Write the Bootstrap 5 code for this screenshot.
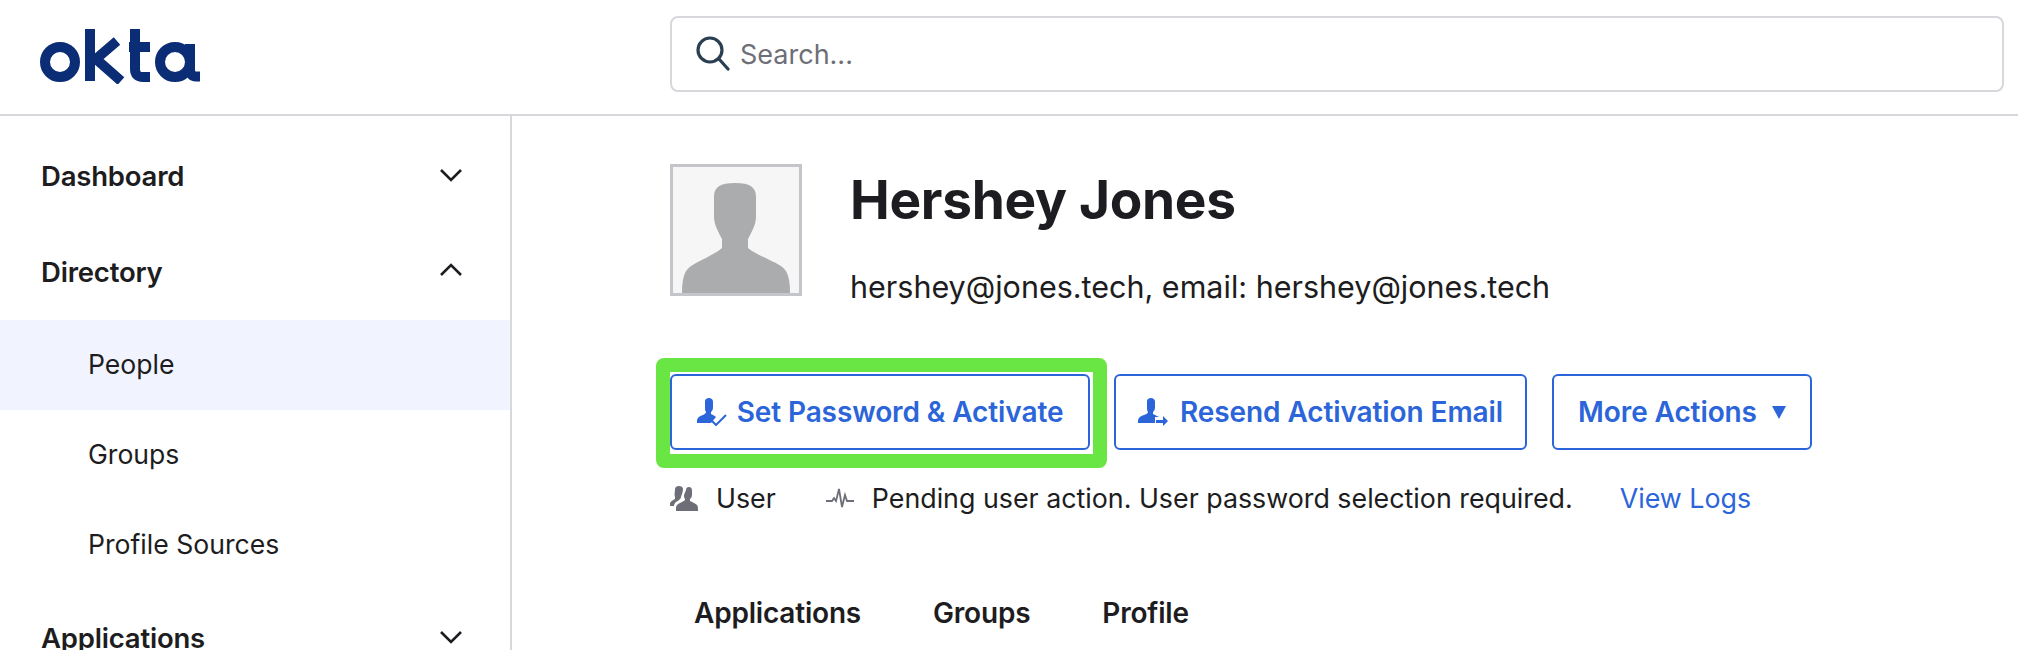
<!doctype html>
<html lang="en"><head><meta charset="utf-8"><title>Okta</title>
<link rel="stylesheet" href="https://cdn.jsdelivr.net/npm/bootstrap@5.3.0/dist/css/bootstrap.min.css">
<style>
html,body{height:650px;overflow:hidden}
body{font-family:Inter,"Liberation Sans",sans-serif;color:#1d1d21;background:#fff}
.top-bar{height:116px;border-bottom:2px solid #d7d7dc}
.brand-cell{width:670px;padding-left:40px;margin-bottom:3px}
.brand-cell svg{display:block}
.search-box{width:1334px;height:76px;margin-bottom:6px;border:2px solid #d7d7dc;border-radius:8px;padding-left:24px;gap:10px;font-size:27px;color:#6e6e78}
.search-box span{padding-top:2px}
.side-nav{width:512px;height:534px;border-right:2px solid #d7d7dc;overflow:hidden;padding-top:12px}
.nav-head{height:96px;padding:0 48px 0 41px;font-size:27.500px;font-weight:600;letter-spacing:-.2px}
.nav-head span{padding-top:2px}
.nav-head svg{margin-bottom:2px}
.nav-head svg.chev-up{margin-bottom:5px}
.nav-sub{height:90px;padding-left:88px;font-size:26.600px}
.nav-sub.current{background:#f1f4fe}
.page-main{padding-left:158px;padding-top:48px}
.avatar-box{width:132px;height:132px;border:3px solid #c4c4cb;background:#f6f6f6;overflow:hidden}
.who-col{margin-left:48px}
.person-name{font-size:53.200px;font-weight:700;line-height:64px;margin:4px 0 37px;letter-spacing:-.3px}
.person-mail{font-size:30.500px;line-height:36px}
.action-row{margin-top:69px}
.act-btn{height:76px;border:2px solid #2b65d9;border-radius:6px;background:#fff;color:#2b65d9;font-size:28px;font-weight:600;padding:0;white-space:nowrap;letter-spacing:-.1px}
.act-btn:hover{color:#2b65d9;background:#fff;border-color:#2b65d9}
.btn-set{width:420px;gap:10px}.btn-resend{width:413px;gap:12px;margin:0 25px 0 24px}.btn-more{width:260px;gap:15px}
.green-wrap{position:relative}
.green-mark{position:absolute;left:-14px;right:-17px;top:-16px;bottom:-18px;border:14px solid #6ae644;border-radius:8px;pointer-events:none}
.status-row{margin-top:28px;font-size:26.800px;line-height:40px;height:40px}
.status-row .user-ic{margin-right:18px}
.status-row .pulse-ic{margin:0 18px 0 50px}
.view-logs{color:#2b65d9;text-decoration:none;margin-left:47px}
.tab-row{margin-top:74px;padding-left:24px;gap:72px;font-size:28px;font-weight:600;letter-spacing:-.2px}
</style></head><body>
<header class="top-bar d-flex align-items-center">
  <div class="brand-cell">
    <svg width="162" height="56" viewBox="0 0 162 56" role="img" aria-label="okta"><g fill="none" stroke="#0b2d76" stroke-width="10">
      <circle cx="20" cy="34" r="15"/>
      <path d="M50 1V53M77 13 56 31 81 53" stroke-linejoin="round"/>
      <path d="M95 1V41Q95 49 103 49H110M89 19H110"/>
      <circle cx="135" cy="34" r="15"/>
      <path d="M150 16V41Q150 48.500 156 48.500H160"/>
    </g></svg>
  </div>
  <div class="search-box d-flex align-items-center">
    <svg width="34" height="36" viewBox="0 0 34 36" fill="none" stroke="#2a3f52" stroke-width="3.200" stroke-linecap="round"><circle cx="14" cy="14" r="12"/><path d="M23 23 32 33"/></svg>
    <span>Search...</span>
  </div>
</header>
<div class="d-flex">
  <nav class="side-nav flex-shrink-0">
    <div class="nav-head d-flex align-items-center justify-content-between"><span>Dashboard</span><svg width="22" height="14" viewBox="0 0 22 14" fill="none" stroke="#1d1d21" stroke-width="2.600"><path d="M1 2 11 12 21 2"/></svg></div>
    <div class="nav-head d-flex align-items-center justify-content-between"><span>Directory</span><svg class="chev-up" width="22" height="14" viewBox="0 0 22 14" fill="none" stroke="#1d1d21" stroke-width="2.600"><path d="M1 12 11 2 21 12"/></svg></div>
    <div class="nav-sub current d-flex align-items-center">People</div>
    <div class="nav-sub d-flex align-items-center">Groups</div>
    <div class="nav-sub d-flex align-items-center">Profile Sources</div>
    <div class="nav-head d-flex align-items-center justify-content-between"><span>Applications</span><svg width="22" height="14" viewBox="0 0 22 14" fill="none" stroke="#1d1d21" stroke-width="2.600"><path d="M1 2 11 12 21 2"/></svg></div>
  </nav>
  <main class="page-main flex-grow-1">
    <div class="d-flex">
      <div class="avatar-box flex-shrink-0">
        <svg class="d-block" width="126" height="126" viewBox="0 0 126 126"><path fill="#abacae" d="M41 30C41 20 47 16 62 16S83 20 83 30V50C83 58 78 66 75 72V81C80 86 100 94 108 99 114 103 117 110 117 126H9C9 110 12 103 18 99 26 94 44 86 49 81V72C46 66 41 58 41 50Z"/></svg>
      </div>
      <div class="who-col">
        <h1 class="person-name">Hershey Jones</h1>
        <div class="person-mail">hershey@jones.tech, email: hershey@jones.tech</div>
      </div>
    </div>
    <div class="action-row d-flex">
      <div class="green-wrap"><button class="btn act-btn btn-set d-flex align-items-center justify-content-center" type="button">
        <svg class="flex-shrink-0" width="30" height="28" viewBox="0 0 30 28" fill="#2b65d9"><path d="M8 3C8 1 10 0 12 0S16 1 16 4V9C16 12 15 13 14 14V16C16 17 18 18 19 19L14 25H0V22C1 19 3 18 6 17 8 16 9 15 9 14 8 13 8 11 8 9Z"/><path d="M15 23 19 27 29 17" fill="none" stroke="#2b65d9" stroke-width="2"/></svg>
        <span>Set Password &amp; Activate</span></button><div class="green-mark"></div></div>
      <button class="btn act-btn btn-resend d-flex align-items-center justify-content-center" type="button">
        <svg class="flex-shrink-0" width="30" height="28" viewBox="0 0 30 28" fill="#2b65d9"><path d="M9 3C9 1 11 0 13 0S17 1 17 4V9C17 12 16 13 15 14V16C17 17 19 18 21 19H17V25H0V22C1 19 3 18 6 17 9 16 10 15 10 14 9 13 9 11 9 9Z"/><path d="M18 22H25V18L30 23 25 28V25H18Z"/></svg>
        <span>Resend Activation Email</span></button>
      <button class="btn act-btn btn-more d-flex align-items-center justify-content-center" type="button"><span>More Actions</span><svg class="flex-shrink-0" width="14" height="14" viewBox="0 0 14 14" fill="#2b65d9"><path d="M0 1H14L7 14Z"/></svg></button>
    </div>
    <div class="status-row d-flex align-items-center">
      <svg class="user-ic" width="28" height="26" viewBox="0 0 28 26" fill="#6e6e78"><path d="M16 5C16 3 17 2 19 2S22 3 22 6V10C22 12 21 13 20 14V16C22 17 25 18 27 20 28 21 28 23 28 26H6V23C6 20 8 19 10 18 12 17 14 16 15 15V14C14 13 14 11 14 10Z"/><path d="M5 4C5 2 7 1 9 1S13 2 13 4 12 9 11 12C11 14 9 15 6 17 5 18 4 19 4 21H0V18C1 16 3 15 5 14V12C4 10 5 7 5 4Z"/></svg>
      <span>User</span>
      <svg class="pulse-ic" width="28" height="20" viewBox="0 0 28 20" fill="none" stroke="#6e6e78" stroke-width="1.800"><path d="M0 13H6L8 10 10 13 13 1 16 19 19 7 21 13H28"/></svg>
      <span>Pending user action. User password selection required.</span>
      <a class="view-logs" href="#">View Logs</a>
    </div>
    <div class="tab-row d-flex"><span>Applications</span><span>Groups</span><span>Profile</span></div>
  </main>
</div>
</body></html>
